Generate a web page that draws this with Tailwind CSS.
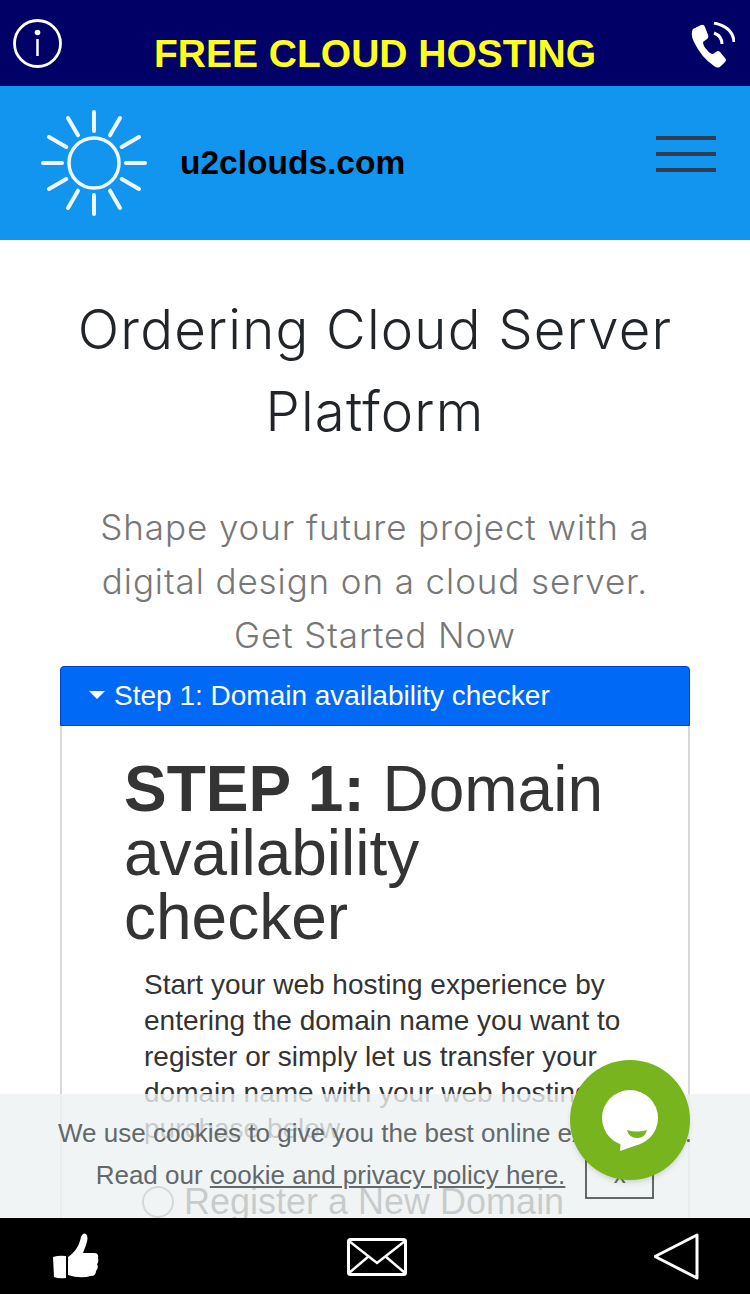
<!DOCTYPE html>
<html lang="en">
<head>
  <meta charset="UTF-8" />
  <meta name="viewport" content="width=device-width, initial-scale=1.0"/>
  <title>Ordering Cloud Server Platform - u2clouds.com</title>
  <script src="https://cdn.jsdelivr.net/npm/@tailwindcss/browser@4"></script>
</head>
<body class="bg-white text-[#212529] font-['Liberation_Sans',sans-serif]">
<div class="relative h-[1294px] w-[750px] overflow-hidden">

  <!-- top banner -->
  <div class="flex h-[86px] items-start justify-between bg-[#000066]">
    <svg class="ml-[12px] mt-[18px] h-[52px] w-[52px]" viewBox="0 0 52 52" fill="none" stroke="white">
      <circle cx="25.500" cy="25.500" r="23" stroke-width="2.800"/>
      <circle cx="25.500" cy="14.500" r="2.800" fill="white" stroke="none"/>
      <path d="M25.500 21v17" stroke-width="2.500"/>
    </svg>
    <div class="ml-[-1px] mt-[32px] text-[39px] leading-[43px] font-bold text-[#ffff1a]">FREE CLOUD HOSTING</div>
    <svg class="mr-[15px] mt-[22px] h-[46px] w-[48px]" viewBox="0 0 48 46" fill="white">
      <path d="M6 7l8-4q3-1 4 2l3 8q1 3-1 4l-4 3q0 4 4 8 3 4 6 4l3-2q2-2 4 0l5 6q2 2 0 4l-4 4q-3 3-7 0Q14 35 7 20 3 12 6 7z"/>
      <path d="M27 11q8 3 8 11M27 1q19 4 20 19" fill="none" stroke="white" stroke-width="3"/>
    </svg>
  </div>

  <!-- nav -->
  <div class="flex h-[154px] items-center bg-[#1295ef] pl-[41px] pr-[34px]">
    <svg class="h-[108px] w-[106px]" viewBox="0 0 106 108" fill="none" stroke="#eef7ff" stroke-linecap="round">
      <circle cx="53" cy="54" r="25" stroke-width="3.500"/>
      <g stroke-width="4">
        <path d="M53 22V3M53 86v19M21 54H2M85 54h19"/>
        <path d="M37 26.300L27 9M69 26.300L79 9M37 81.700L27 99M69 81.700L79 99"/>
        <path d="M25.300 38L8 28M80.700 38L98 28M25.300 70L8 80M80.700 70L98 80"/>
      </g>
    </svg>
    <div class="ml-[33px] text-[33.500px] font-bold text-black">u2clouds.com</div>
    <div class="ml-auto mb-[18px] flex w-[60px] flex-col gap-[12px]">
      <div class="h-[4px] bg-[#2c3e50]"></div>
      <div class="h-[4px] bg-[#2c3e50]"></div>
      <div class="h-[4px] bg-[#2c3e50]"></div>
    </div>
  </div>

  <!-- heading -->
  <div class="pt-[48px] text-center font-['Inter',sans-serif]">
    <h1 class="text-[54.500px] leading-[82px] font-light tracking-[1.2px] text-[#212529]">Ordering Cloud Server<br>Platform</h1>
    <p class="mt-[48px] text-[35px] leading-[54px] font-light tracking-[0.9px] text-[#777]">Shape your future project with a<br>digital design on a cloud server.<br>Get Started Now</p>
  </div>

  <!-- accordion -->
  <div class="mx-[60px] mt-[4px]">
    <div class="flex h-[60px] items-center rounded-t-[4px] border border-[#0040d0] bg-[#0069f5] pl-[28px] text-[28px] text-white">
      <span class="mr-[9px] h-0 w-0 -translate-y-[1px] border-x-[8px] border-t-[8px] border-x-transparent border-t-white"></span>
      Step 1: Domain availability checker
    </div>
    <div class="h-[560px] border-x-2 border-[#d9d9d9] pl-[62px] pr-[40px] pt-[31px]">
      <h2 class="text-[64px] leading-[64px] text-[#343434]"><b>STEP 1:</b> Domain availability checker</h2>
      <p class="mt-[18px] ml-[20px] text-[28px] leading-[36px] text-[#333]">Start your web hosting experience by entering the domain name you want to register or simply let us transfer your domain name with your web hosting purchase below.</p>
      <div class="mt-[35px] ml-[18px] flex items-center gap-[10px] text-[36px] leading-[40px] text-[#333]">
        <span class="h-[32px] w-[32px] rounded-full border-2 border-[#767676]"></span>
        Register a New Domain
      </div>
    </div>
  </div>

  <!-- cookie notice -->
  <div class="absolute left-0 right-0 top-[1094px] h-[124px] bg-[#edf1f1]/80 pt-[18px] text-center text-[26px] leading-[42px] text-[#63686b]">
    <div class="whitespace-nowrap">We use cookies to give you the best online experience.</div>
    <div class="flex items-start justify-center">
      <div>Read our <a href="#" class="underline">cookie and privacy policy here.</a></div>
      <div class="ml-[20px] mt-[-3px] flex h-[48px] w-[69px] items-center justify-center border-2 border-[#63686b] text-[24px]">x</div>
    </div>
  </div>

  <!-- chat button -->
  <div class="absolute left-[570px] top-[1060px] flex h-[120px] w-[120px] items-center justify-center rounded-full bg-[#78b41e] shadow-md">
    <svg class="h-[82px] w-[62px]" viewBox="0 0 62 82" fill="white">
      <circle cx="31" cy="39" r="28"/>
      <path d="M22 58l-1 14 20-7z"/>
      <path d="M28 51q10 3 20 0q-2 8-10 8t-10-8z" fill="#78b41e"/>
    </svg>
  </div>

  <!-- bottom bar -->
  <div class="absolute bottom-0 left-0 right-0 flex h-[76px] items-center justify-between bg-black pl-[52px] pr-[50px]">
    <svg class="h-[50px] w-[48px]" viewBox="0 0 48 50" fill="white">
      <path d="M1 26q6-2 13-1v22q-7 1-12-1z"/>
      <path d="M16 26C22 22 27 16 29 6q2-5 5-3 3 3 0 11l-3 8h11q5 0 4 5 1 4-1 6 2 4-1 7 0 5-5 5-11 3-23-1z"/>
    </svg>
    <svg class="mt-[1px] h-[38px] w-[60px]" viewBox="0 0 60 38" fill="none" stroke="white" stroke-width="3">
      <rect x="1.500" y="1.500" width="57" height="35" rx="2"/>
      <path d="M2 3l28 22L58 3M2 35l20-17M58 35L38 18" stroke-width="2.500"/>
    </svg>
    <svg class="h-[50px] w-[46px]" viewBox="0 0 46 50" fill="none" stroke="white" stroke-width="3" stroke-linejoin="round">
      <path d="M43 4v43L1 25.500z"/>
    </svg>
  </div>
</div>
</body>
</html>
